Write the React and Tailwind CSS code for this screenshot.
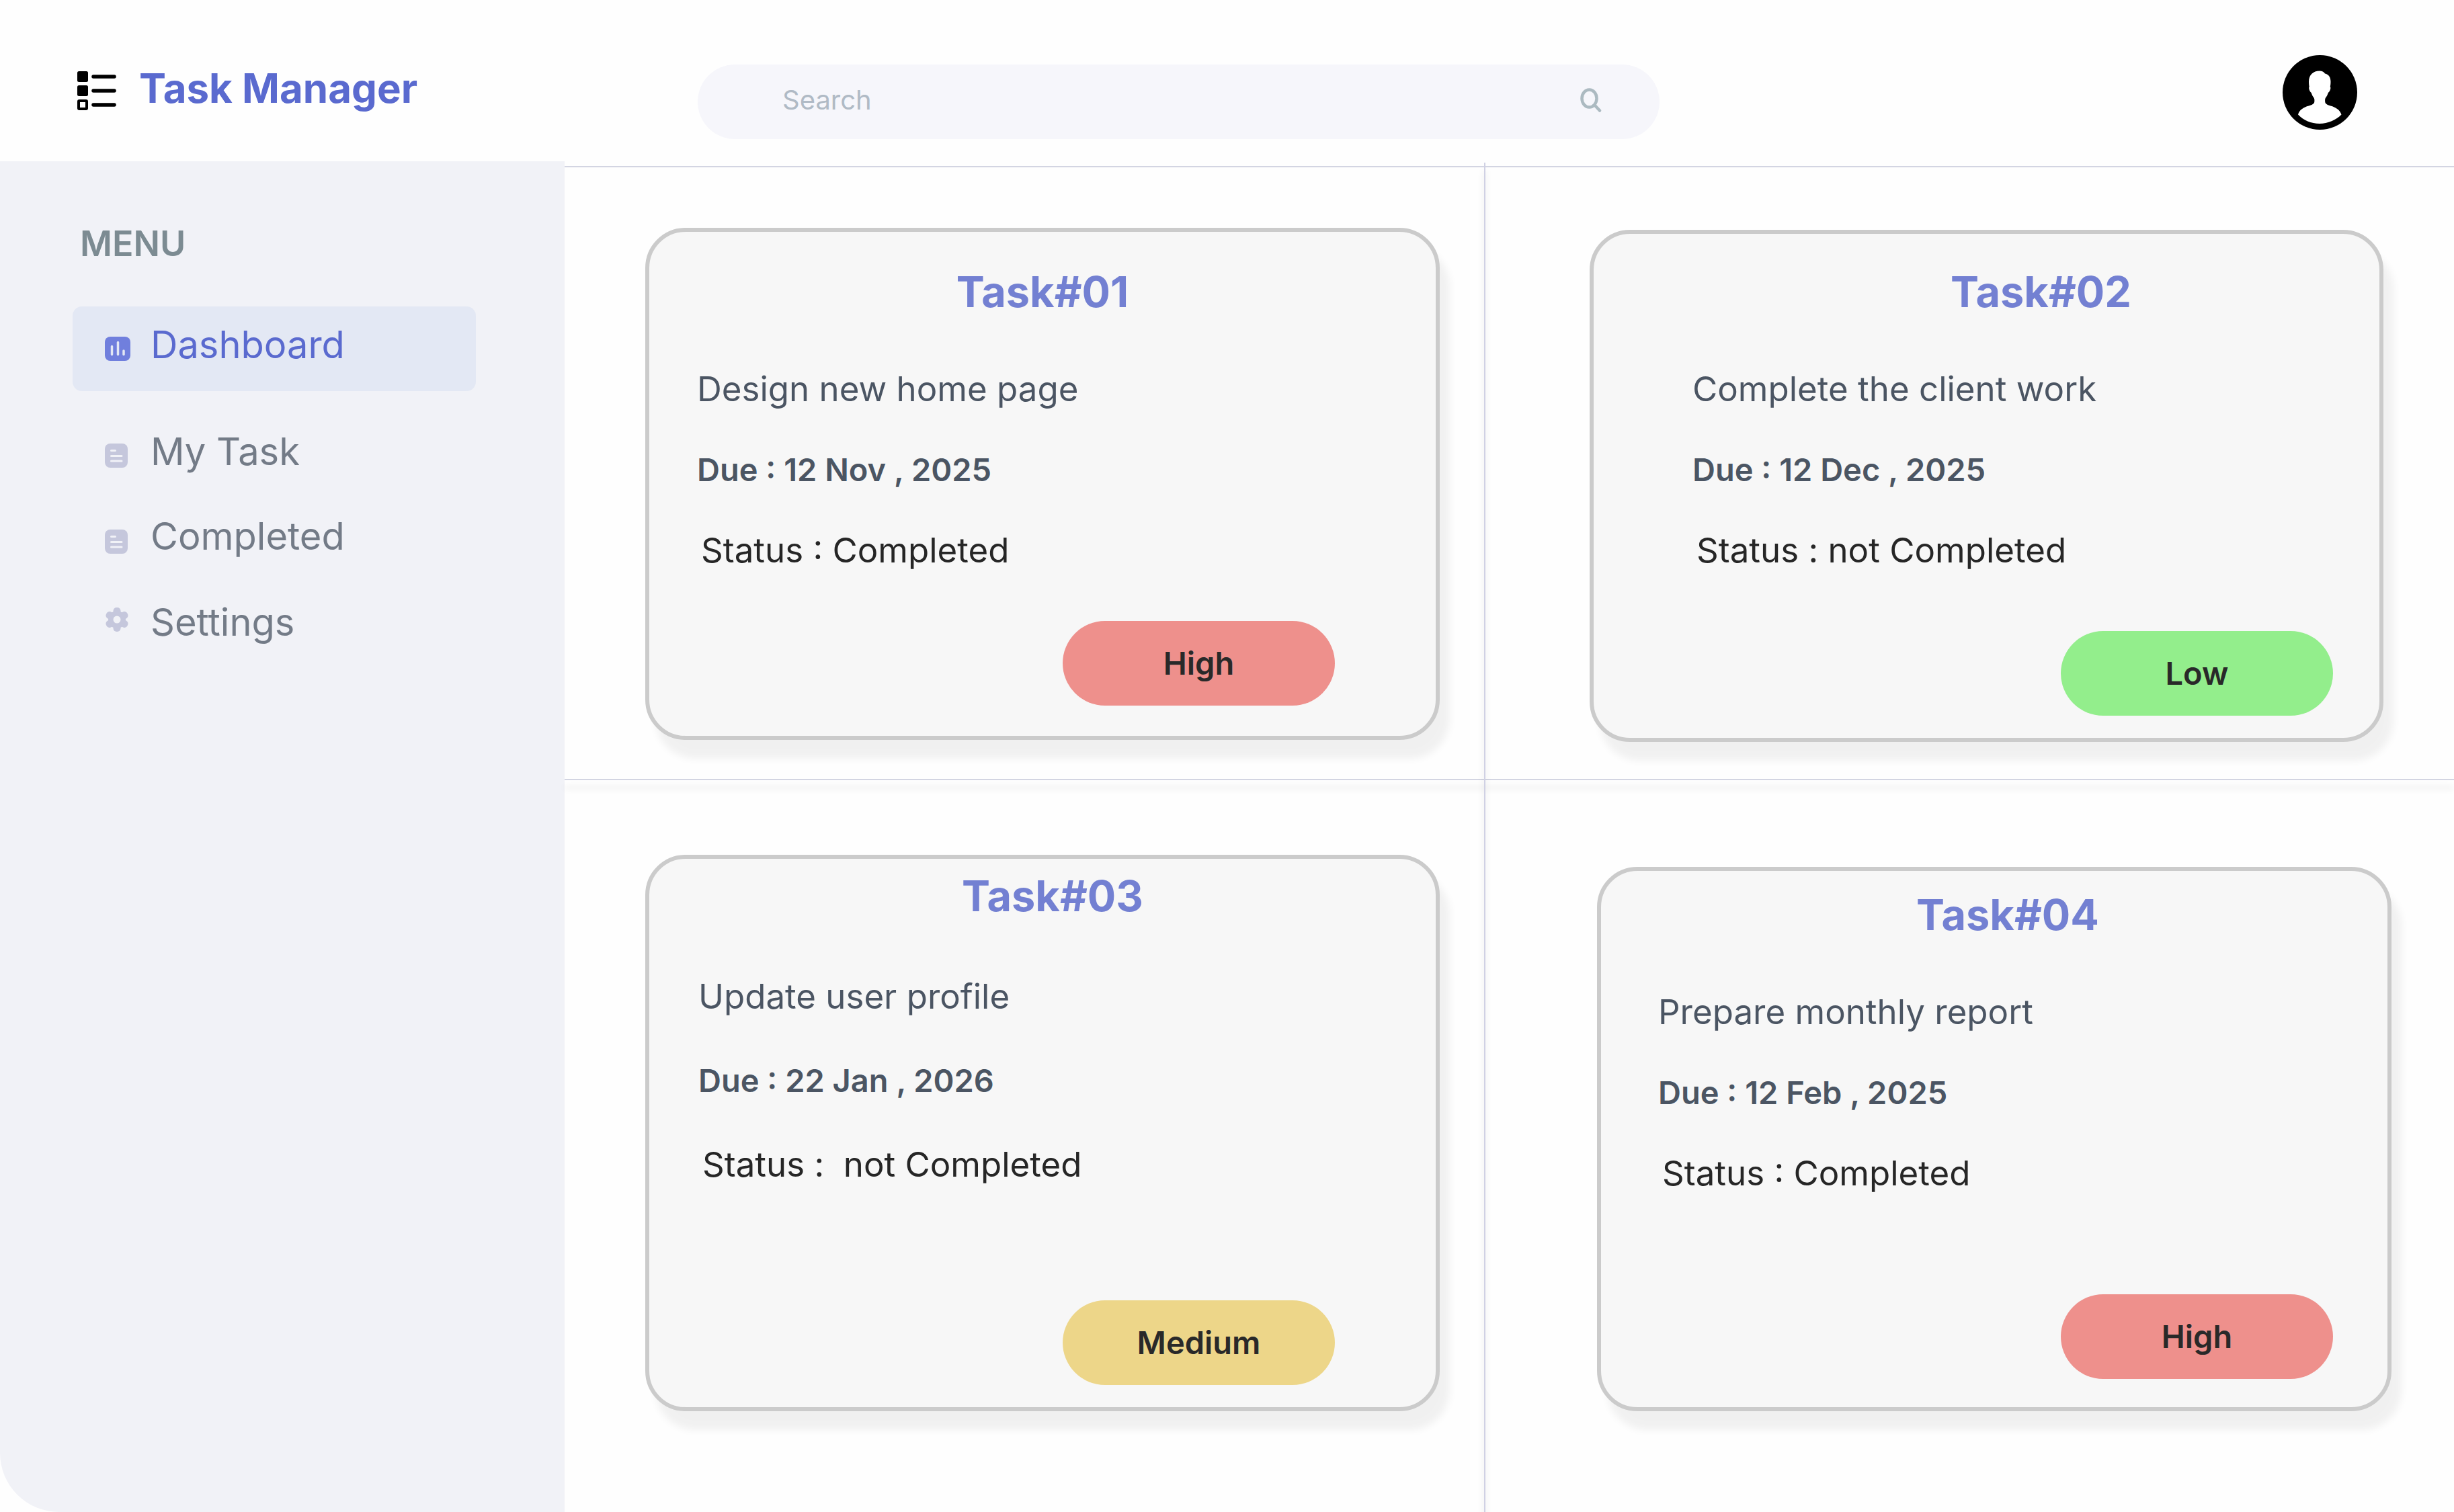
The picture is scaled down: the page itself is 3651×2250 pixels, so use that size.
const NAV = [
  { label: "Dashboard", icon: ChartIcon, item: "h-[126px] rounded-[14px] bg-[#e3e8f4] text-[#5a6acf]", text: "pb-3", current: true },
  { label: "My Task", icon: NoteIcon, item: "mt-8 h-[128px] text-[#737b87]", text: "pb-3" },
  { label: "Completed", icon: NoteIcon, item: "h-[128px] text-[#737b87]", text: "pb-4" },
  { label: "Settings", icon: GearIcon, item: "h-[104px] text-[#737b87]", text: "pt-2" },
];

const TASKS = [
  {
    id: "01", text: "Design new home page", due: "Due : 12 Nov , 2025", status: "Status : Completed", priority: "High",
    place: "col-start-1 row-start-3 pt-[90px] pb-[58px] pl-[120px] pr-[66px]",
    card: "pt-[53px] pb-[45px]", title: "", body: "mt-[79px] gap-[60px] pl-[71px]", pill: "mt-[75px] mr-[150px] bg-[#ee908c]",
  },
  {
    id: "02", text: "Complete the client work", due: "Due : 12 Dec , 2025", status: "Status : not Completed", priority: "Low",
    place: "col-start-3 row-start-3 pt-[93px] pb-[55px] pl-[155px] pr-[105px]",
    card: "pt-[50px] pb-[33px]", title: "pl-[162px]", body: "mt-[79px] gap-[60px] pl-[147px]", pill: "mt-[90px] mr-[69px] bg-[#93ee8c]",
  },
  {
    id: "03", text: "Update user profile", due: "Due : 22 Jan , 2026", status: "Status :  not Completed", priority: "Medium",
    place: "col-start-1 row-start-5 pt-[111px] pb-[150px] pl-[120px] pr-[66px]",
    card: "pt-[19px] pb-[33px]", title: "pl-[30px]", body: "mt-[84px] gap-[65px] pl-[73px]", pill: "mt-[172px] mr-[150px] bg-[#edd689]",
  },
  {
    id: "04", text: "Prepare monthly report", due: "Due : 12 Feb , 2025", status: "Status : Completed", priority: "High",
    place: "col-start-3 row-start-5 pt-[129px] pb-[150px] pl-[166px] pr-[93px]",
    card: "pt-[29px] pb-[42px]", title: "pl-[40px]", body: "mt-[79px] gap-[60px] pl-[85px]", pill: "mt-[150px] mr-[81px] bg-[#ee908c]",
  },
];

function LogoIcon() {
  return (
    <svg viewBox="0 0 58 58" className="size-[58px] shrink-0" aria-hidden="true">
      <rect x="0" y="0" width="16" height="16" rx="2.5" />
      <rect x="0" y="21" width="16" height="16" rx="2.5" />
      <rect x="2" y="44" width="12" height="12" rx="1" fill="none" stroke="#000" strokeWidth="4" />
      <path d="M24 8h31M24 29h31M24 50h31" stroke="#000" strokeWidth="5.5" strokeLinecap="round" />
    </svg>
  );
}

function ChartIcon() {
  return (
    <svg viewBox="0 0 38 36" className="h-9 w-[38px]" aria-hidden="true">
      <rect width="38" height="36" rx="8" fill="#707fdd" />
      <path d="M10.500 14.500v12M19.500 8.500v18M28 21v5.500" stroke="#e3e8f4" strokeWidth="3.5" strokeLinecap="round" />
    </svg>
  );
}

function NoteIcon() {
  return (
    <svg viewBox="0 0 34 36" className="h-9 w-[34px]" aria-hidden="true">
      <rect width="34" height="36" rx="8" fill="#c5c7dc" />
      <path d="M9.500 10.500h6M9.500 18.500h15.500M9.500 26h15.500" stroke="#f1f2f7" strokeWidth="3" strokeLinecap="round" />
    </svg>
  );
}

function GearIcon() {
  return (
    <svg viewBox="-18 -18 36 36" className="size-9" aria-hidden="true">
      <g fill="#c5c7dc">
        <circle r="13" />
        {[0, 60, 120].map((a) => (
          <rect key={a} x="-5.500" y="-18" width="11" height="36" rx="5" transform={`rotate(${a})`} />
        ))}
      </g>
      <circle r="5.500" fill="#f1f2f7" />
    </svg>
  );
}

function SearchIcon() {
  return (
    <svg viewBox="0 0 32 36" className="h-9 w-8" fill="none" stroke="#acbac1" strokeWidth="4.5" strokeLinecap="round" aria-hidden="true">
      <ellipse cx="13.500" cy="15.500" rx="11" ry="13" />
      <path d="M22 26l7 7.500" />
    </svg>
  );
}

function AvatarIcon() {
  return (
    <svg viewBox="0 0 111 111" className="size-[111px]" aria-hidden="true">
      <circle cx="55.500" cy="55.500" r="55.500" />
      <path
        fill="#fff"
        d="M55 23.500c3.500 0 6.500 1.500 8 4 5.500 1 8.500 5.500 8.500 12 0 3-.3 5.500-.7 7.500 1 1 .7 4-.8 6.500-1 1.500-2 2-2.300 3-1 3-2.200 5-3.700 7-1 1.300-1 3.500-.8 6 .3 3.500 4 4.800 8 6 8 2 14 6 16.300 13-8 8-20 13.500-32.500 13.500S31 97 23 88.500c2-7 8-11 16-13 4-1.200 8-2.500 8.300-6 .2-2.500.2-4.700-.8-6-1.500-2-2.700-4-3.700-7-.3-1-1.500-1.500-2.300-3-1.300-2.500-1.800-5.500-.8-6.500-.4-2-.7-4.500-.7-7.500 0-10 6.500-16 16-16z"
      />
    </svg>
  );
}

function TaskCard({ task }) {
  return (
    <div className={task.place}>
      <article className={`flex flex-col rounded-[60px] border-[6px] border-[#cbcbcb] bg-[#f7f7f7] shadow-[15px_28px_12px_rgba(0,0,0,0.055)] ${task.card}`}>
        <h2 className={`text-center text-[63px] leading-[72px] font-bold text-[#7380d2] ${task.title}`}>Task#{task.id}</h2>
        <div className={`flex flex-col text-[51px] leading-[60px] text-[#4b5563] ${task.body}`}>
          <p>{task.text}</p>
          <p className="text-[47px] font-semibold">{task.due}</p>
          <p className="pl-1.5 whitespace-pre text-[#262626]">{task.status}</p>
        </div>
        <button type="button" className={`h-[126px] w-[405px] self-end rounded-full text-[47px] leading-[60px] font-semibold text-[#292929] ${task.pill}`}>
          {task.priority}
        </button>
      </article>
    </div>
  );
}

export default function App() {
  return (
    <div className="flex min-h-screen flex-col bg-[#fefefe] font-[Inter,sans-serif]">
      <header className="flex h-60 shrink-0 items-start">
        <div className="flex w-[840px] shrink-0 items-start gap-[34px] pl-[115px]">
          <div className="pt-[106px]"><LogoIcon /></div>
          <h1 className="pt-[93px] text-[60px] leading-[76px] font-bold text-[#5a6acf]">Task Manager</h1>
        </div>
        <form role="search" className="mt-24 ml-[198px] flex h-[111px] max-w-[1431px] flex-1 items-center rounded-full bg-[#f6f6fb] pr-[86px] pb-1.5 pl-[126px]">
          <input type="search" aria-label="Search" placeholder="Search" className="min-w-0 flex-1 bg-transparent text-[40px] leading-[48px] text-[#4b5563] outline-none placeholder:text-[#b0bac5]" />
          <button type="submit" aria-label="Submit search"><SearchIcon /></button>
        </form>
        <button type="button" aria-label="Account" className="mt-[82px] mr-36 ml-auto"><AvatarIcon /></button>
      </header>
      <div className="flex flex-1">
        <aside className="w-[840px] shrink-0 rounded-bl-[88px] bg-[#f1f2f7] pt-[90px]">
          <h2 className="pl-[119px] text-[52px] leading-[66px] font-semibold text-[#7c8b92]">MENU</h2>
          <nav className="mt-[60px] mr-[132px] ml-[108px]" aria-label="Main menu">
            {NAV.map(({ label, icon: Icon, item, text, current }) => (
              <a key={label} href="#" aria-current={current ? "page" : undefined} className={`flex items-center text-[56px] leading-[66px] ${item}`}>
                <span className="flex w-[116px] justify-start pl-12"><Icon /></span>
                <span className={text}>{label}</span>
              </a>
            ))}
          </nav>
        </aside>
        <main className="mt-0.5 grid flex-1 grid-cols-[1368fr_2px_1441fr] grid-rows-[5px_2px_auto_2px_1fr]">
          <div className="col-span-3 col-start-1 row-start-2 bg-[#d3d5e2]" />
          <div className="col-span-3 col-start-1 row-start-4 bg-[#d3d5e2] shadow-[0_12px_10px_rgba(0,0,0,0.15)]" />
          <div className="col-start-2 row-span-5 row-start-1 bg-[#d0d1e4] shadow-[0_12px_10px_rgba(0,0,0,0.15)]" />
          {TASKS.map((task) => <TaskCard key={task.id} task={task} />)}
        </main>
      </div>
    </div>
  );
}
